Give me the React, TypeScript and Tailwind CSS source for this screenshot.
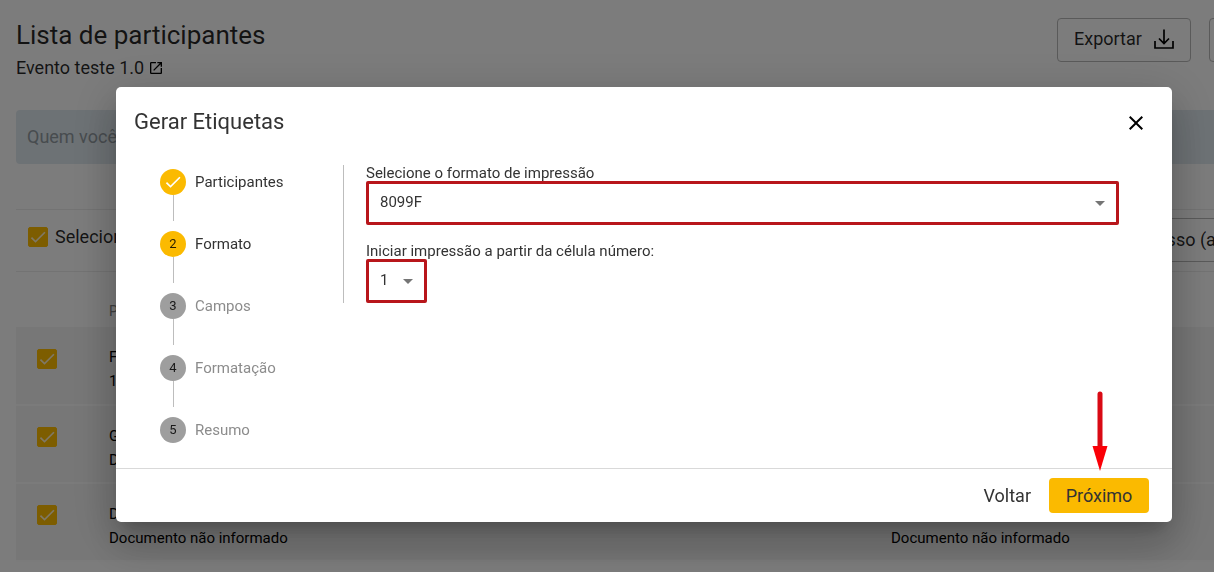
import { useState } from 'react';
import { MdArrowDropDown, MdCheck, MdClose, MdOpenInNew } from 'react-icons/md';

interface Participant {
  name: string;
  document: string;
  access: string;
}

const participants: Participant[] = [
  { name: 'Fernanda', document: '123', access: 'Documento não informado' },
  { name: 'Gabriel', document: 'Documento', access: 'Documento não informado' },
  { name: 'Daniel', document: 'Documento não informado', access: 'Documento não informado' },
];

const steps = ['Participantes', 'Formato', 'Campos', 'Formatação', 'Resumo'];

function DownloadIcon() {
  return (
    <svg width="20" height="20" viewBox="0 0 20 20" fill="none" stroke="currentColor" strokeWidth="1.7" aria-hidden="true">
      <path d="M10 0.5V14M5 9.5l5 5 5-5" />
      <path d="M1 12v7h18v-7" />
    </svg>
  );
}

function Checkbox({ label }: { label: string }) {
  return (
    <span className="relative inline-flex size-5 shrink-0">
      <input
        type="checkbox"
        defaultChecked
        aria-label={label}
        className="size-5 appearance-none rounded-xs border border-[#fbba00] checked:bg-[#fbba00]"
      />
      <MdCheck className="pointer-events-none absolute inset-0 size-5 text-white/80" />
    </span>
  );
}

function ParticipantsPage() {
  return (
    <main className="overflow-hidden pl-4 text-black/85">
      <header className="flex justify-between pt-[18px]">
        <div>
          <h1 className="text-[26px] leading-[34px]">Lista de participantes</h1>
          <a href="#evento" className="flex items-center gap-1 text-lg leading-8">
            Evento teste 1.0
            <MdOpenInNew className="size-4 text-black" />
          </a>
        </div>
        <div className="flex w-[157px] shrink-0 items-start gap-[18px]">
          <button className="flex h-11 shrink-0 items-center gap-3 rounded-sm border border-[#b4b4b4] px-4 pb-[2px] text-lg">
            Exportar
            <span className="text-black"><DownloadIcon /></span>
          </button>
          <button aria-label="Mais opções" className="h-11 w-11 shrink-0 rounded-sm border border-[#b4b4b4]" />
        </div>
      </header>

      <input
        type="search"
        aria-label="Buscar participante"
        placeholder="Quem você procura?"
        className="mt-[26px] block h-[54px] w-full rounded-l-sm bg-[#dbe4ea] px-[11px] pb-[2px] text-lg placeholder:text-[#8f989e]"
      />

      <div className="mt-[45px] flex h-[63px] items-start justify-between border-y border-[#e6e6e6] pt-2 pl-3">
        <div className="flex h-[38px] items-center gap-[7px] text-lg">
          <Checkbox label="Selecionar todos" />
          <span>Selecionar</span>
        </div>
        <div className="flex w-[150px] shrink-0">
          <button className="h-11 shrink-0 rounded-sm border border-[#b4b4b4] px-4 text-lg whitespace-nowrap">
            Último acesso (ascendente)
          </button>
        </div>
      </div>

      <table className="mt-[23px] w-full table-fixed text-left">
        <thead>
          <tr className="h-8 text-sm text-[#808080]">
            <th className="w-[93px]" />
            <th className="font-normal">Participante</th>
            <th className="w-[323px]" />
          </tr>
        </thead>
        <tbody>
          {participants.map((p) => (
            <tr key={p.name} className="h-[78px] border-b-2 border-[#f6f6f6] bg-[#eeeeee] text-[15px] leading-6 text-black">
              <td className="pt-[6px] pl-[21px] align-middle">
                <div className="-mt-5 flex"><Checkbox label={p.name} /></div>
              </td>
              <td className="pt-[18px] align-top">
                {p.name}
                <br />
                {p.document}
              </td>
              <td className="pt-[18px] align-top">
                {p.name}
                <br />
                {p.access}
              </td>
            </tr>
          ))}
        </tbody>
      </table>
    </main>
  );
}

function Stepper({ current }: { current: number }) {
  return (
    <ol className="w-[183px] shrink-0 pt-1">
      {steps.map((step, i) => (
        <li key={step}>
          <div className="flex items-center gap-[9px]">
            <span
              className={`flex size-[26px] items-center justify-center rounded-full text-[13px] text-black/85 ${
                i <= current ? 'bg-[#fbba00]' : 'bg-[#9e9e9e]'
              }`}
            >
              {i < current ? <MdCheck className="size-5 text-white" /> : i + 1}
            </span>
            <span className={`text-[15px] leading-6 ${i <= current ? 'text-[#333]' : 'text-[#8c8c8c]'}`}>{step}</span>
          </div>
          {i < steps.length - 1 && <div className="mb-[10px] ml-[13px] h-[26px] w-px bg-[#bdbdbd]" />}
        </li>
      ))}
    </ol>
  );
}

function LabelDialog() {
  const [format, setFormat] = useState('8099F');
  const [cell, setCell] = useState('1');

  return (
    <div className="fixed inset-0 flex items-start bg-black/50 pt-[87px] pr-[42px] pl-[116px]">
      <div
        role="dialog"
        aria-labelledby="dialog-title"
        className="flex-1 rounded-[5px] bg-white text-[#333] shadow-[0_11px_15px_-7px_rgba(0,0,0,0.2),0_24px_38px_3px_rgba(0,0,0,0.14),0_9px_46px_8px_rgba(0,0,0,0.12)]"
      >
        <div className="flex h-[78px] items-start justify-between pt-[21px] pr-6 pl-[18px]">
          <h2 id="dialog-title" className="text-[22px] leading-7">Gerar Etiquetas</h2>
          <button aria-label="Fechar" className="pt-[3px] text-black">
            <MdClose className="size-6" />
          </button>
        </div>

        <div className="flex items-start pr-[53px] pb-[25px] pl-11">
          <Stepper current={1} />
          <form className="flex-1 border-l border-[#bdbdbd] pl-[22px] text-[15px]">
            <label htmlFor="format" className="block leading-4">Selecione o formato de impressão</label>
            <div className="relative">
              <select
                id="format"
                value={format}
                onChange={(e) => setFormat(e.target.value)}
                className="h-11 w-full appearance-none rounded-xs border-3 border-[#b8161b] bg-white px-[11px] pb-[2px]"
              >
                <option>8099F</option>
              </select>
              <MdArrowDropDown className="pointer-events-none absolute top-[10px] right-[7px] size-6 text-[#757575]" />
            </div>
            <label htmlFor="cell" className="mt-[18px] block leading-4">Iniciar impressão a partir da célula número:</label>
            <div className="relative w-[61px]">
              <select
                id="cell"
                value={cell}
                onChange={(e) => setCell(e.target.value)}
                className="h-11 w-full appearance-none rounded-xs border-3 border-[#b8161b] bg-white px-[11px] pb-[2px]"
              >
                <option>1</option>
              </select>
              <MdArrowDropDown className="pointer-events-none absolute top-[10px] right-[7px] size-6 text-[#757575]" />
            </div>
          </form>
        </div>

        <div className="flex items-center justify-end gap-[18px] border-t border-[#d9d9d9] py-[9px] pr-[23px] text-lg">
          <button>Voltar</button>
          <div className="relative">
            <button className="h-[35px] w-[100px] rounded-sm bg-[#fbba00]">Próximo</button>
            <svg
              width="16"
              height="80"
              viewBox="0 0 16 80"
              className="pointer-events-none absolute bottom-[42px] left-[43px]"
              aria-hidden="true"
            >
              <path d="M8 3v54" stroke="#d90a14" strokeWidth="5" strokeLinecap="round" />
              <path d="M0.5 55h15L8 80z" fill="#fb0007" />
            </svg>
          </div>
        </div>
      </div>
    </div>
  );
}

export default function App() {
  return (
    <div className="h-screen overflow-hidden bg-[#f9f9f9] font-['Roboto',sans-serif]">
      <ParticipantsPage />
      <LabelDialog />
    </div>
  );
}
